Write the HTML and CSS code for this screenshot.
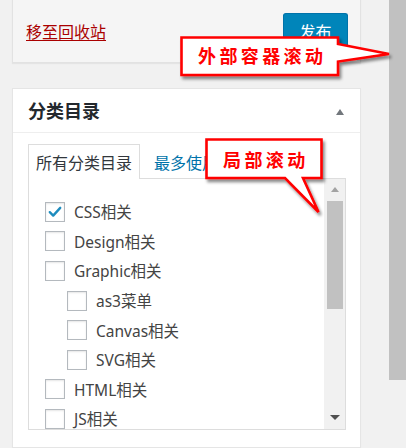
FILE: index.html
```html
<!DOCTYPE html>
<html lang="zh-CN">
<head>
<meta charset="utf-8">
<title>分类目录</title>
<link rel="stylesheet" href="styles.css">
</head>
<body>
<div class="page">
  <main class="main">
    <section class="publish">
      <a class="trash" href="#">移至回收站</a>
      <button class="btn-primary" type="button">发布</button>
    </section>
    <section class="postbox">
      <header class="postbox-head">
        <h2 class="postbox-title">分类目录</h2>
        <span class="toggle"></span>
      </header>
      <div class="inside">
        <ul class="tabs">
          <li class="tab active">所有分类目录</li>
          <li class="tab">最多使用</li>
        </ul>
        <div class="panel">
          <ul class="cats">
            <li class="cat"><span class="cb checked"><svg viewBox="0 0 20 20" width="20" height="20"><path d="M4.2 10.2 L8 14 L15.8 5.4" fill="none" stroke="#1e8cbe" stroke-width="2.6" stroke-linecap="round" stroke-linejoin="round"/></svg></span><span class="lbl">CSS相关</span></li>
            <li class="cat"><span class="cb"></span><span class="lbl">Design相关</span></li>
            <li class="cat"><span class="cb"></span><span class="lbl">Graphic相关</span></li>
            <li class="cat child"><span class="cb"></span><span class="lbl">as3菜单</span></li>
            <li class="cat child"><span class="cb"></span><span class="lbl">Canvas相关</span></li>
            <li class="cat child"><span class="cb"></span><span class="lbl">SVG相关</span></li>
            <li class="cat"><span class="cb"></span><span class="lbl">HTML相关</span></li>
            <li class="cat"><span class="cb"></span><span class="lbl">JS相关</span></li>
          </ul>
          <div class="vscroll">
            <span class="arrow-up"></span>
            <span class="vthumb"></span>
            <span class="vspacer"></span>
            <span class="arrow-down"></span>
          </div>
        </div>
      </div>
    </section>
  </main>
  <div class="page-scroll"><div class="page-thumb"></div></div>
</div>
<svg class="callouts" width="406" height="448" viewBox="0 0 406 448">
  <defs>
    <filter id="sh" x="-10%" y="-20%" width="130%" height="160%">
      <feDropShadow dx="2" dy="3" stdDeviation="1.6" flood-color="#000" flood-opacity="0.45"/>
    </filter>
  </defs>
  <path d="M181.5 37.5 H338 V44 L389 54 L338 61.5 V75 H181.5 Z" fill="#fff" stroke="#ff0000" stroke-width="2.6" stroke-linejoin="miter" filter="url(#sh)"/>
  <text x="198" y="63" class="callout-text">外部容器滚动</text>
  <path d="M206.5 139.5 H321.5 V178 H303 L318.5 212 L285 178 H206.5 Z" fill="#fff" stroke="#ff0000" stroke-width="2.6" stroke-linejoin="miter" filter="url(#sh)"/>
  <text x="223" y="167" class="callout-text">局部滚动</text>
</svg>
</body>
</html>
```

FILE: styles.css
```css
* { box-sizing: border-box; }
html, body {
  margin: 0;
  padding: 0;
  width: 406px;
  height: 448px;
  overflow: hidden;
  background: #f1f1f1;
  font-family: "Noto Sans", "Noto Sans CJK SC", sans-serif;
}
.page {
  position: relative;
  display: flex;
  width: 406px;
  height: 448px;
}
.main {
  flex: 1;
  padding: 0 28px 0 12px;
  display: flex;
  flex-direction: column;
}
.publish {
  height: 64px;
  margin-top: -1px;
  background: #f5f5f5;
  border: 1px solid #e2e2e2;
  box-shadow: 0 1px 1px rgba(0,0,0,0.05);
  display: flex;
  align-items: center;
  justify-content: space-between;
  padding: 0 12px 0 13px;
}
.trash {
  color: #a00;
  font-size: 16px;
  font-family: "Noto Sans CJK SC", sans-serif;
  text-decoration: underline;
  text-underline-offset: 2px;
  line-height: 20px;
}
.btn-primary {
  height: 36px;
  width: 65px;
  margin-top: 0;
  background: #0085ba;
  border: 1px solid #0073aa;
  border-bottom-color: #006799;
  border-radius: 3px;
  box-shadow: 0 1px 0 #006799;
  color: #fff;
  font-size: 16px;
  font-family: "Noto Sans CJK SC", sans-serif;
  padding: 0;
}
.postbox {
  margin-top: 25px;
  background: #fff;
  border: 1px solid #e5e5e5;
  box-shadow: 0 1px 1px rgba(0,0,0,0.04);
  flex: 1;
}
.postbox-head {
  height: 44px;
  border-bottom: 1px solid #eee;
  display: flex;
  align-items: center;
  justify-content: space-between;
  padding: 0 16px 0 15px;
}
.postbox-title {
  margin: 0;
  font-size: 18px;
  font-weight: 600;
  color: #23282d;
  font-family: "Noto Sans CJK SC", sans-serif;
  line-height: 43px;
}
.toggle {
  width: 0;
  height: 0;
  border-left: 4.5px solid transparent;
  border-right: 4.5px solid transparent;
  border-bottom: 6px solid #72777c;
  margin-top: 2px;
}
.inside {
  padding: 11px 14px 0 15px;
}
.tabs {
  list-style: none;
  margin: 0 0 -1px 0;
  padding: 0;
  display: flex;
  position: relative;
  z-index: 1;
}
.tab {
  font-size: 16px;
  font-family: "Noto Sans CJK SC", sans-serif;
  line-height: 34px;
  color: #0073aa;
  padding: 0 7px;
  margin-left: 6px;
  border: 1px solid transparent;
  border-bottom: 0;
}
.tab.active {
  margin-left: 0;
  color: #32373c;
  background: #fff;
  border-color: #ddd;
}
.panel {
  height: 252px;
  border: 1px solid #ddd;
  display: flex;
  background: #fff;
}
.cats {
  flex: 1;
  list-style: none;
  margin: 0;
  padding: 18px 0 0 16px;
  overflow: hidden;
}
.cat {
  height: 29.6px;
  display: flex;
  align-items: center;
}
.cat.child {
  padding-left: 22px;
}
.cb {
  width: 20px;
  height: 20px;
  flex: none;
  border: 1px solid #b4b9be;
  background: #fff;
  box-shadow: inset 0 1px 2px rgba(0,0,0,0.1);
  display: flex;
  align-items: center;
  justify-content: center;
}
.cb svg { display: block; }
.lbl {
  margin-left: 9px;
  font-size: 15.5px;
  color: #444;
  white-space: nowrap;
}
.vscroll {
  width: 21px;
  flex: none;
  background: #f1f1f1;
  display: flex;
  flex-direction: column;
  align-items: center;
  padding: 8px 0 9px;
}
.arrow-up {
  width: 0;
  height: 0;
  border-left: 4.5px solid transparent;
  border-right: 4.5px solid transparent;
  border-bottom: 5px solid #a3a3a3;
}
.vthumb {
  width: 16px;
  height: 108px;
  margin-top: 9px;
  background: #c1c1c1;
}
.vspacer { flex: 1; }
.arrow-down {
  width: 0;
  height: 0;
  border-left: 5px solid transparent;
  border-right: 5px solid transparent;
  border-top: 5px solid #505050;
}
.page-scroll {
  width: 17px;
  flex: none;
  background: #f1f1f1;
}
.page-thumb {
  height: 380px;
  background: #c1c1c1;
}
.callouts {
  position: absolute;
  left: 0;
  top: 0;
  z-index: 10;
  pointer-events: none;
}
.callout-text {
  font-family: "Noto Sans CJK SC", sans-serif;
  font-weight: 700;
  font-size: 18px;
  letter-spacing: 3.4px;
  fill: #ff0000;
}
```
